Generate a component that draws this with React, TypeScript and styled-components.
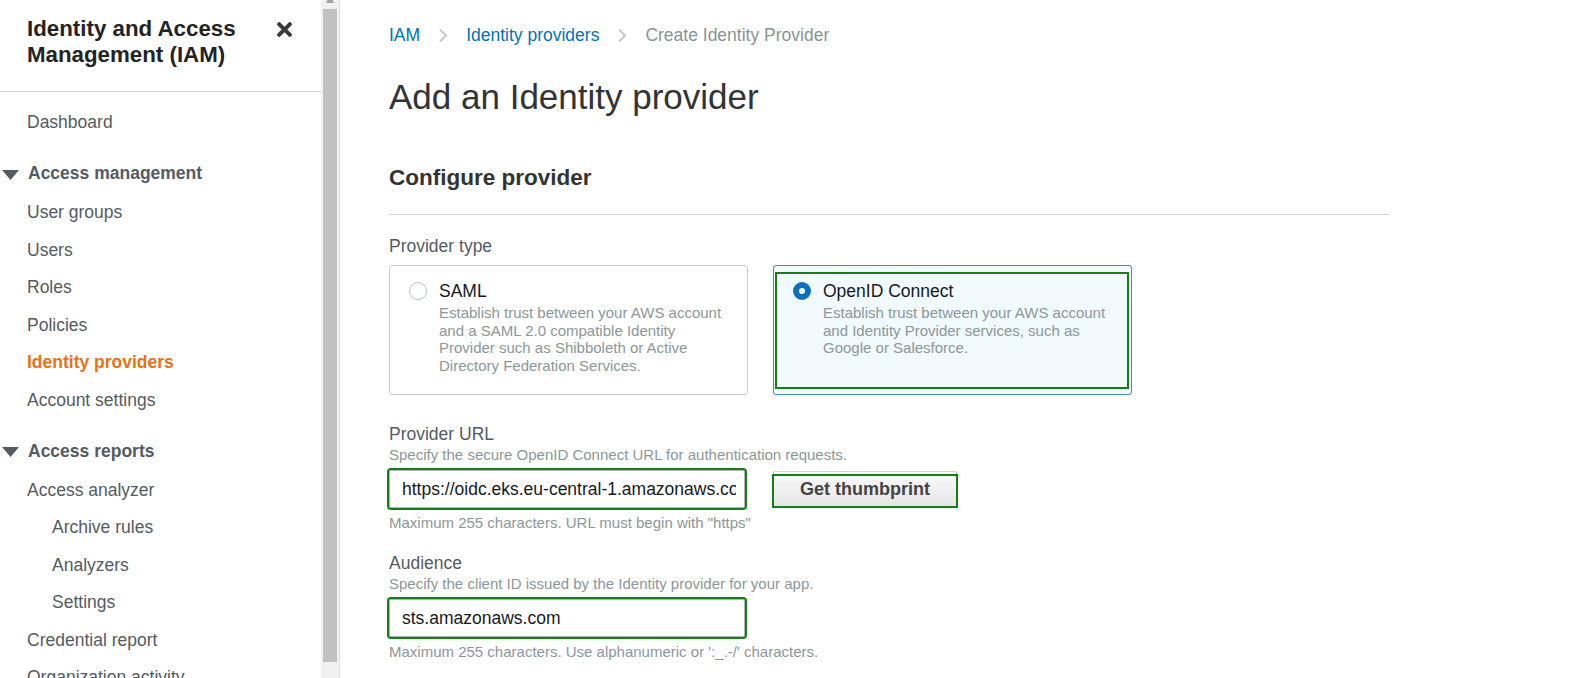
import React from 'react';
import styled, { createGlobalStyle } from 'styled-components';

const GREEN = '#128012';

const GlobalStyle = createGlobalStyle`
  html, body {
    margin: 0;
    padding: 0;
    height: 100%;
    overflow: hidden;
    background: #ffffff;
  }
  body {
    font-family: "Liberation Sans", Arial, sans-serif;
  }
  #root {
    height: 100%;
  }
  *, *::before, *::after {
    box-sizing: border-box;
  }
`;

const Page = styled.div`
  display: flex;
  height: 100vh;
  overflow: hidden;
`;

/* ---------- Sidebar ---------- */

const Sidebar = styled.aside`
  width: 321px;
  flex: none;
  display: flex;
  flex-direction: column;
  overflow: hidden;
  background: #ffffff;
`;

const SideHeader = styled.div`
  display: grid;
  grid-template-columns: 240px 15px;
  column-gap: 10px;
  padding: 16px 0 23px 27px;
  border-bottom: 1px solid #d5d5d5;
`;

const SideTitle = styled.h2`
  margin: 0;
  font-size: 22.3px;
  line-height: 26px;
  font-weight: 700;
  color: #232323;
`;

const CloseButton = styled.button`
  margin-top: 6px;
  width: 15px;
  height: 15px;
  padding: 0;
  border: 0;
  background: none;
  color: #3a3a3a;
  display: flex;
  cursor: pointer;
`;

const NavList = styled.nav`
  padding-top: 12px;
  display: flex;
  flex-direction: column;
`;

const NavLink = styled.a<{ $active?: boolean; $indent?: boolean }>`
  display: block;
  height: 37.5px;
  line-height: 37.5px;
  font-size: 17.5px;
  padding-left: ${(p) => (p.$indent ? 52 : 27)}px;
  color: ${(p) => (p.$active ? '#ec7211' : '#545b64')};
  font-weight: ${(p) => (p.$active ? 700 : 400)};
  text-decoration: none;
  white-space: nowrap;
`;

const NavSection = styled.div`
  display: flex;
  align-items: center;
  gap: 9px;
  height: 37.5px;
  margin: 13.5px 0 1.5px;
  padding-left: 2px;
  font-size: 17.5px;
  font-weight: 700;
  color: #545b64;
  white-space: nowrap;
`;

const Caret = styled.svg`
  width: 17px;
  height: 10px;
  flex: none;
  margin-top: 2px;
`;

/* ---------- Scrollbar ---------- */

const ScrollTrack = styled.div`
  width: 19px;
  flex: none;
  display: flex;
  flex-direction: column;
  background: #f1f1f1;
  border-right: 1px solid #dedede;
`;

const ScrollArrow = styled.div`
  height: 9px;
  display: flex;
  justify-content: center;
  overflow: hidden;
`;

const ArrowTip = styled.span`
  margin-top: -5px;
  width: 0;
  height: 0;
  border-left: 4.5px solid transparent;
  border-right: 4.5px solid transparent;
  border-bottom: 8px solid #a3a3a3;
`;

const ScrollThumb = styled.div`
  flex: 1;
  margin: 0 2px 16px;
  background: #c1c1c1;
`;

/* ---------- Main ---------- */

const Main = styled.main`
  flex: 1;
  min-width: 0;
  padding: 25px 0 0 49px;
  overflow: hidden;
  color: #16191f;
`;

const Breadcrumbs = styled.nav`
  display: flex;
  align-items: center;
  gap: 18px;
  font-size: 17.5px;
  line-height: 20px;
`;

const Crumb = styled.a<{ $current?: boolean }>`
  color: ${(p) => (p.$current ? '#879596' : '#0073bb')};
  text-decoration: none;
  white-space: nowrap;
`;

const CrumbChevron = styled.svg`
  width: 10px;
  height: 15px;
  flex: none;
`;

const PageTitle = styled.h1`
  margin: 32px 0 0;
  font-size: 35px;
  line-height: 40px;
  font-weight: 400;
  color: #333333;
`;

const SectionTitle = styled.h2`
  margin: 48px 0 0;
  font-size: 22.5px;
  line-height: 26px;
  font-weight: 700;
  color: #333333;
`;

const Rule = styled.hr`
  margin: 23px 0 0;
  width: 1000px;
  height: 0;
  border: 0;
  border-top: 1px solid #d5d5d5;
`;

const FieldLabel = styled.div<{ $gap: number }>`
  margin-top: ${(p) => p.$gap}px;
  font-size: 17.5px;
  line-height: 20px;
  color: #545b64;
`;

const Tiles = styled.div`
  display: grid;
  grid-template-columns: 359px 359px;
  column-gap: 25px;
  margin-top: 9px;
`;

const Tile = styled.label<{ $selected?: boolean }>`
  position: relative;
  display: flex;
  align-items: flex-start;
  gap: 12px;
  padding: 14px 20px 20px 19px;
  border: 1px solid ${(p) => (p.$selected ? '#3b8ad6' : '#c6cccd')};
  border-radius: 3px;
  background: ${(p) => (p.$selected ? '#f1faff' : '#ffffff')};
`;

const Radio = styled.span<{ $checked?: boolean }>`
  flex: none;
  width: 18px;
  height: 18px;
  margin-top: 2px;
  border-radius: 50%;
  background: #ffffff;
  border: ${(p) => (p.$checked ? '6px solid #0b6fc2' : '1px solid #b8c0c1')};
`;

const TileBody = styled.div`
  display: flex;
  flex-direction: column;
`;

const TileTitle = styled.span`
  font-size: 17.5px;
  line-height: 22px;
  color: #16191f;
`;

const TileDesc = styled.span`
  margin-top: 2px;
  font-size: 15px;
  line-height: 17.5px;
  color: #8c979a;
`;

const TileMark = styled.span`
  position: absolute;
  top: 6px;
  left: 1px;
  right: 2px;
  bottom: 5px;
  border: 2px solid ${GREEN};
  pointer-events: none;
`;

const FieldText = styled.div<{ $gap: number }>`
  margin-top: ${(p) => p.$gap}px;
  font-size: 15px;
  line-height: 18px;
  color: #8c979a;
`;

const InputRow = styled.div`
  margin-top: 6px;
  display: flex;
  align-items: center;
  gap: 28px;
`;

const TextInput = styled.input`
  width: 356px;
  height: 38px;
  padding: 0 8px 0 12px;
  border: 1px solid #aab7b8;
  border-radius: 2px;
  background: #ffffff;
  font-family: "Liberation Sans", Arial, sans-serif;
  font-size: 17.5px;
  color: #16191f;
  outline: 2px solid ${GREEN};
  outline-offset: 0;
`;

const ThumbButton = styled.button`
  position: relative;
  height: 37px;
  padding: 0 26px;
  border: 1px solid #b5bbbd;
  border-top-color: #cfd3d4;
  border-radius: 2px;
  background: linear-gradient(#fbfbfb, #e4e4e4);
  font-family: "Liberation Sans", Arial, sans-serif;
  font-size: 18px;
  font-weight: 700;
  color: #444444;
  white-space: nowrap;
  cursor: pointer;

  &::after {
    content: "";
    position: absolute;
    top: 2px;
    left: -2px;
    right: -2px;
    bottom: -1px;
    border: 2px solid ${GREEN};
  }
`;

const Chevron = () => (
  <CrumbChevron viewBox="0 0 10 15">
    <polyline points="2,1.5 8,7.5 2,13.5" fill="none" stroke="#c2cbcc" strokeWidth="2" />
  </CrumbChevron>
);

const SectionCaret = () => (
  <Caret viewBox="0 0 17 10">
    <polygon points="0,0 17,0 8.5,10" fill="#545b64" />
  </Caret>
);

export default function App() {
  return (
    <>
      <GlobalStyle />
      <Page>
        <Sidebar>
          <SideHeader>
            <SideTitle>Identity and Access Management (IAM)</SideTitle>
            <CloseButton aria-label="Close">
              <svg viewBox="0 89 352 334" width="15" height="15">
                <path
                  fill="currentColor"
                  d="M242.72 256l100.07-100.07c12.28-12.28 12.28-32.19 0-44.48l-22.24-22.24c-12.28-12.28-32.19-12.28-44.48 0L176 189.28 75.93 89.21c-12.28-12.28-32.19-12.28-44.48 0L9.21 111.45c-12.28 12.28-12.28 32.19 0 44.48L109.28 256 9.21 356.07c-12.28 12.28-12.28 32.19 0 44.48l22.24 22.24c12.28 12.28 32.2 12.28 44.48 0L176 322.72l100.07 100.07c12.28 12.28 32.2 12.28 44.48 0l22.24-22.24c12.28-12.28 12.28-32.19 0-44.48L242.72 256z"
                />
              </svg>
            </CloseButton>
          </SideHeader>
          <NavList>
            <NavLink>Dashboard</NavLink>
            <NavSection>
              <SectionCaret />
              Access management
            </NavSection>
            <NavLink>User groups</NavLink>
            <NavLink>Users</NavLink>
            <NavLink>Roles</NavLink>
            <NavLink>Policies</NavLink>
            <NavLink $active>Identity providers</NavLink>
            <NavLink>Account settings</NavLink>
            <NavSection>
              <SectionCaret />
              Access reports
            </NavSection>
            <NavLink>Access analyzer</NavLink>
            <NavLink $indent>Archive rules</NavLink>
            <NavLink $indent>Analyzers</NavLink>
            <NavLink $indent>Settings</NavLink>
            <NavLink>Credential report</NavLink>
            <NavLink>Organization activity</NavLink>
          </NavList>
        </Sidebar>
        <ScrollTrack>
          <ScrollArrow>
            <ArrowTip />
          </ScrollArrow>
          <ScrollThumb />
        </ScrollTrack>
        <Main>
          <Breadcrumbs>
            <Crumb>IAM</Crumb>
            <Chevron />
            <Crumb>Identity providers</Crumb>
            <Chevron />
            <Crumb $current>Create Identity Provider</Crumb>
          </Breadcrumbs>
          <PageTitle>Add an Identity provider</PageTitle>
          <SectionTitle>Configure provider</SectionTitle>
          <Rule />
          <FieldLabel $gap={21}>Provider type</FieldLabel>
          <Tiles>
            <Tile>
              <Radio />
              <TileBody>
                <TileTitle>SAML</TileTitle>
                <TileDesc>
                  Establish trust between your AWS account and a SAML 2.0 compatible Identity Provider such as
                  Shibboleth or Active Directory Federation Services.
                </TileDesc>
              </TileBody>
            </Tile>
            <Tile $selected>
              <Radio $checked />
              <TileBody>
                <TileTitle>OpenID Connect</TileTitle>
                <TileDesc>
                  Establish trust between your AWS account and Identity Provider services, such as Google or
                  Salesforce.
                </TileDesc>
              </TileBody>
              <TileMark />
            </Tile>
          </Tiles>

          <FieldLabel $gap={29}>Provider URL</FieldLabel>
          <FieldText $gap={2}>Specify the secure OpenID Connect URL for authentication requests.</FieldText>
          <InputRow>
            <TextInput defaultValue="https://oidc.eks.eu-central-1.amazonaws.com/id/EXAMPLED539D4633E53DE1B716D3041E" />
            <ThumbButton>Get thumbprint</ThumbButton>
          </InputRow>
          <FieldText $gap={6}>Maximum 255 characters. URL must begin with "https"</FieldText>

          <FieldLabel $gap={21}>Audience</FieldLabel>
          <FieldText $gap={2}>Specify the client ID issued by the Identity provider for your app.</FieldText>
          <InputRow>
            <TextInput defaultValue="sts.amazonaws.com" />
          </InputRow>
          <FieldText $gap={6}>Maximum 255 characters. Use alphanumeric or ':_.-/' characters.</FieldText>
        </Main>
      </Page>
    </>
  );
}
